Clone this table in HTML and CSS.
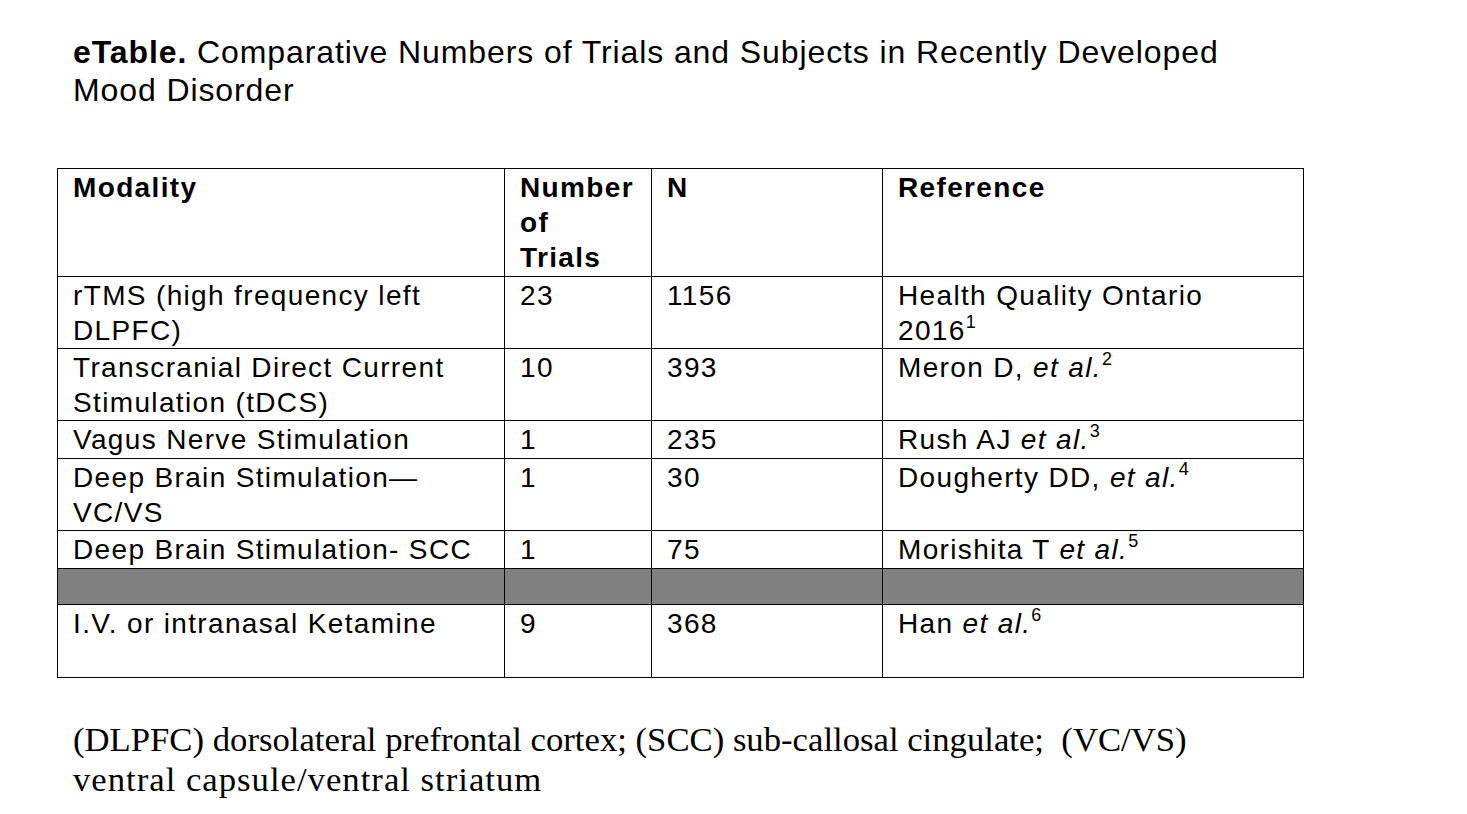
FILE: index.html
```html
<!DOCTYPE html>
<html>
<head>
<meta charset="utf-8">
<link rel="stylesheet" href="styles.css">
</head>
<body>
<div class="page">
  <h1 class="title"><b>eTable.</b> Comparative Numbers of Trials and Subjects in Recently Developed<br>Mood Disorder</h1>
  <table class="data">
    <colgroup>
      <col class="c1"><col class="c2"><col class="c3"><col class="c4">
    </colgroup>
    <thead>
      <tr class="head">
        <th>Modality</th>
        <th>Number<br>of<br>Trials</th>
        <th>N</th>
        <th>Reference</th>
      </tr>
    </thead>
    <tbody>
      <tr>
        <td>rTMS (high frequency left<br>DLPFC)</td>
        <td>23</td>
        <td>1156</td>
        <td>Health Quality Ontario<br>2016<sup>1</sup></td>
      </tr>
      <tr>
        <td>Transcranial Direct Current<br>Stimulation (tDCS)</td>
        <td>10</td>
        <td>393</td>
        <td>Meron D, <i>et al.</i><sup>2</sup></td>
      </tr>
      <tr class="one">
        <td>Vagus Nerve Stimulation</td>
        <td>1</td>
        <td>235</td>
        <td>Rush AJ <i>et al.</i><sup>3</sup></td>
      </tr>
      <tr>
        <td>Deep Brain Stimulation—<br>VC/VS</td>
        <td>1</td>
        <td>30</td>
        <td>Dougherty DD, <i>et al.</i><sup>4</sup></td>
      </tr>
      <tr class="one">
        <td>Deep Brain Stimulation- SCC</td>
        <td>1</td>
        <td>75</td>
        <td>Morishita T <i>et al.</i><sup>5</sup></td>
      </tr>
      <tr class="shade">
        <td>&nbsp;</td>
        <td>&nbsp;</td>
        <td>&nbsp;</td>
        <td>&nbsp;</td>
      </tr>
      <tr class="last">
        <td>I.V. or intranasal Ketamine<br>&nbsp;</td>
        <td>9</td>
        <td>368</td>
        <td>Han <i>et al.</i><sup>6</sup></td>
      </tr>
    </tbody>
  </table>
  <p class="note">(DLPFC) dorsolateral prefrontal cortex; (SCC) sub-callosal cingulate;&nbsp; (VC/VS)<br><span class="note-line">ventral capsule/ventral striatum</span></p>
</div>
</body>
</html>
```
FILE: styles.css
```css
html, body {
  margin: 0;
  padding: 0;
  background: #ffffff;
  color: #000000;
}

.page {
  padding: 33px 0 0 57px;
}

.title {
  margin: 0 0 59px 16px;
  font-family: "Liberation Sans", Arial, sans-serif;
  font-size: 32px;
  letter-spacing: 0.9px;
  font-weight: normal;
  line-height: 38px;
  white-space: nowrap;
}

.title b {
  font-weight: bold;
}

.data {
  border-collapse: collapse;
  width: 1246px;
  table-layout: fixed;
  font-family: "Liberation Sans", Arial, sans-serif;
  font-size: 28px;
  letter-spacing: 1.35px;
  line-height: 35px;
}

.c1 { width: 447px; }
.c2 { width: 147px; }
.c3 { width: 231px; }
.c4 { width: 421px; }

.data th,
.data td {
  border: 1px solid #000000;
  padding: 1px 8px 0 15px;
  text-align: left;
  vertical-align: top;
  white-space: nowrap;
}

.data th {
  font-weight: bold;
  padding-bottom: 1px;
}

.data .one td {
  padding-bottom: 1px;
}

.data .last td {
  padding-bottom: 1px;
}

.data sup {
  font-size: 18px;
  letter-spacing: 0;
  line-height: 0;
  vertical-align: 12px;
}

.data .shade td {
  background: #808080;
  padding: 0;
}

.note {
  margin: 42px 0 0 16px;
  font-family: "Liberation Serif", "Times New Roman", serif;
  font-size: 34.7px;
  line-height: 40px;
  white-space: nowrap;
}

.note-line {
  letter-spacing: 1px;
}
```
